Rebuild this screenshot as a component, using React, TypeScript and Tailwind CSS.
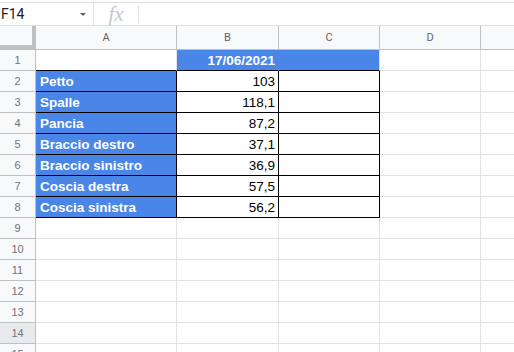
const cols = ['A', 'B', 'C', 'D', ''];
const colW = ['w-[141px]', 'w-[102px]', 'w-[101px]', 'w-[101px]', 'w-[101px]'];

const data: Array<[string, string]> = [
  ['Petto', '103'],
  ['Spalle', '118,1'],
  ['Pancia', '87,2'],
  ['Braccio destro', '37,1'],
  ['Braccio sinistro', '36,9'],
  ['Coscia destra', '57,5'],
  ['Coscia sinistra', '56,2'],
];

function RowHeader({ n, active }: { n: number; active?: boolean }) {
  return (
    <div
      className={`w-[36px] shrink-0 h-full flex items-center justify-center pt-[1px] border-r border-b border-[#c0c0c0] text-[11px] text-[#70757a] ${
        active ? 'bg-[#e8eaed]' : 'bg-[#f8f9fa]'
      }`}
    >
      {n}
    </div>
  );
}

function EmptyCells({ from }: { from: number }) {
  return (
    <>
      {colW.slice(from).map((w, i) => (
        <div key={i} className={`${w} shrink-0 h-full border-r border-b border-[#e2e2e2]`} />
      ))}
    </>
  );
}

export default function App() {
  return (
    <div className="w-[514px] h-[352px] overflow-hidden bg-white font-['Roboto',sans-serif]">
      {/* formula bar */}
      <div className="mt-[2px] h-[24px] border-t border-b border-[#e0e0e0] flex items-center">
        <div className="w-[93px] flex items-center pl-[1px] pr-[7px] text-[14px] text-[#202124]">
          <span>F14</span>
          <span className="ml-auto w-0 h-0 border-l-[3px] border-r-[3px] border-t-[3px] border-l-transparent border-r-transparent border-t-[#5f6368]" />
        </div>
        <div className="w-px h-full bg-[#e0e0e0]" />
        <div className="w-[44px] flex justify-center font-['Liberation_Serif',serif] italic text-[21px] text-[#c8c8c8] leading-none">
          fx
        </div>
        <div className="w-px h-[18px] bg-[#e0e0e0]" />
      </div>

      {/* column headers */}
      <div className="flex h-[24px] bg-[#f8f9fa]">
        <div className="w-[36px] shrink-0 h-full relative border-b border-[#c0c0c0]">
          <div className="absolute right-0 top-0 w-[4px] h-full bg-[#c0c0c0]" />
          <div className="absolute left-0 bottom-0 w-full h-[4px] bg-[#c0c0c0]" />
        </div>
        {cols.map((c, i) => (
          <div
            key={i}
            className={`${colW[i]} shrink-0 h-full flex items-center justify-center pt-[2px] border-r border-b border-[#c0c0c0] text-[11px] text-[#5f6368]`}
          >
            {c}
          </div>
        ))}
      </div>

      <div className="font-['Liberation_Sans',Arial,sans-serif] text-[13.5px]">
        {/* row 1 */}
        <div className="flex h-[21px]">
          <RowHeader n={1} />
          <div className="w-[141px] shrink-0 h-full border-r border-r-[#e2e2e2] border-b border-b-black" />
          <div className="w-[102px] shrink-0 h-full bg-[#4a86e8] border-r border-r-[#4a86e8] border-b border-b-black flex items-center justify-end pt-[2px] pr-[3px] text-white font-bold">
            17/06/2021
          </div>
          <div className="w-[101px] shrink-0 h-full bg-[#4a86e8] border-r border-r-[#e2e2e2] border-b border-b-black" />
          <EmptyCells from={3} />
        </div>

        {data.map(([label, val], i) => (
          <div key={label} className="flex h-[21px]">
            <RowHeader n={i + 2} />
            <div className="w-[141px] shrink-0 h-full bg-[#4a86e8] border-r border-b border-black flex items-center pt-[2px] pl-[4px] text-white font-bold">
              {label}
            </div>
            <div className="w-[102px] shrink-0 h-full border-r border-b border-black flex items-center justify-end pt-[2px] pr-[3px] text-black">
              {val}
            </div>
            <div className="w-[101px] shrink-0 h-full border-r border-b border-black" />
            <EmptyCells from={3} />
          </div>
        ))}

        {[9, 10, 11, 12, 13, 14, 15].map((n) => (
          <div key={n} className="flex h-[21px]">
            <RowHeader n={n} active={n === 14} />
            <EmptyCells from={0} />
          </div>
        ))}
      </div>
    </div>
  );
}
